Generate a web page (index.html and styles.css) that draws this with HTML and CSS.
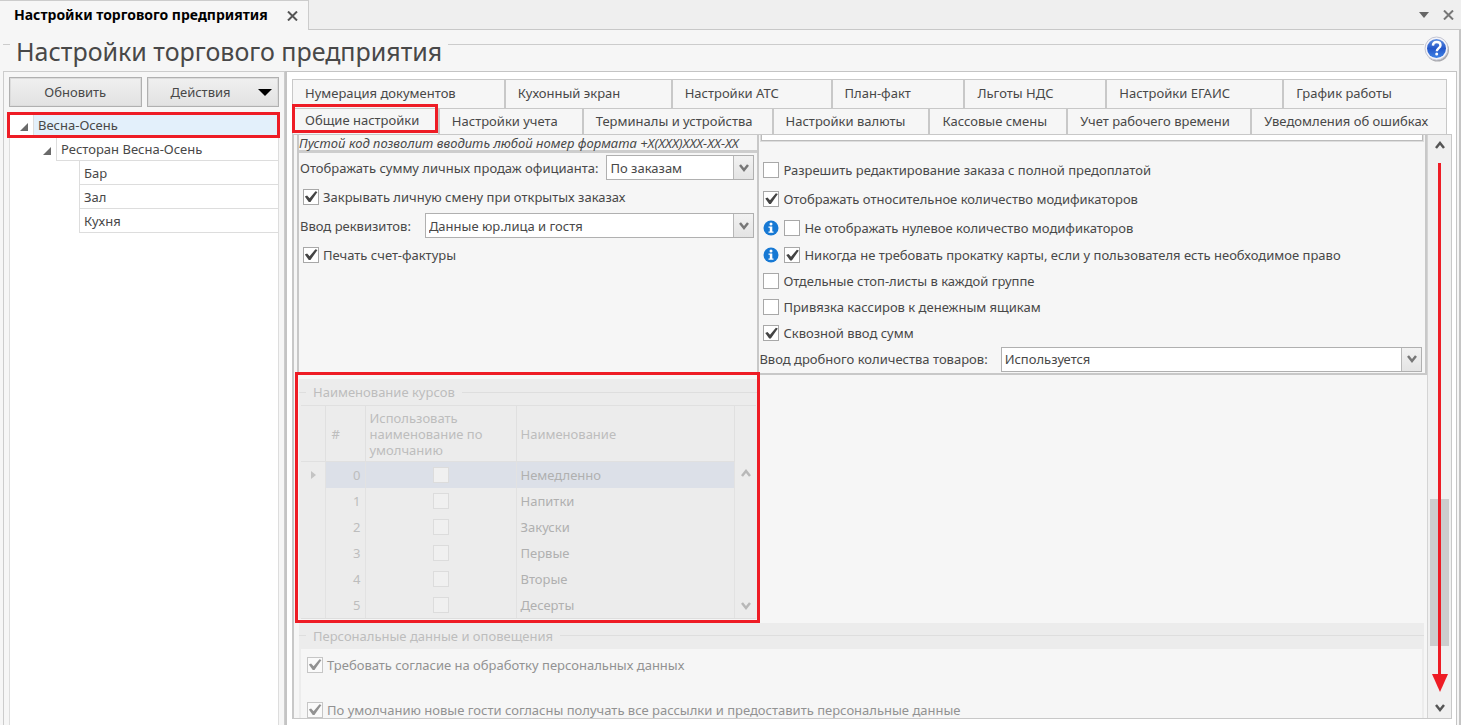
FILE: index.html
```html
<!DOCTYPE html>
<html lang="ru">
<head>
<meta charset="utf-8">
<title>Настройки торгового предприятия</title>
<link rel="stylesheet" href="styles.css">
</head>
<body>
<div class="app">
  <header class="window-bar">
    <div class="window-tab">
      <span class="window-title">Настройки торгового предприятия</span>
      <button class="icon-btn" aria-label="Закрыть вкладку"><svg width="11" height="10" viewBox="0 0 11 10"><path d="M1 0.5L10 9.5M10 0.5L1 9.5" stroke="#555" stroke-width="2"/></svg></button>
    </div>
    <div class="window-tools">
      <button class="icon-btn" aria-label="Список вкладок"><svg width="10" height="6" viewBox="0 0 10 6"><path d="M0 0H10L5 6Z" fill="#666"/></svg></button>
      <button class="icon-btn" aria-label="Закрыть"><svg width="11" height="10" viewBox="0 0 11 10"><path d="M1 0.5L10 9.5M10 0.5L1 9.5" stroke="#777" stroke-width="2"/></svg></button>
    </div>
  </header>

  <main class="page">
    <div class="page-head">
      <h1>Настройки торгового предприятия</h1>
      <button class="icon-btn help" aria-label="Справка">
        <svg width="26" height="26" viewBox="0 0 26 26">
          <defs><linearGradient id="helpFill" x1="0" y1="0" x2="0" y2="1"><stop offset="0" stop-color="#5f8fe0"/><stop offset="0.5" stop-color="#2457c9"/><stop offset="1" stop-color="#3f83e6"/></linearGradient></defs>
          <circle cx="13.5" cy="14" r="11.5" fill="#a9a9ad"/>
          <circle cx="12.5" cy="12.5" r="11.5" fill="#f4f4fa" stroke="#c3c5d2"/>
          <circle cx="12.5" cy="12.5" r="9.5" fill="url(#helpFill)"/>
          <path d="M8.9 9.6C9 7.2 10.6 6 12.7 6c2.200 0 3.800 1.200 3.800 3.200 0 2.800-3.700 3-3.700 6" fill="none" stroke="#fff" stroke-width="2.400"/>
          <circle cx="12.700" cy="18" r="1.500" fill="#fff"/>
        </svg>
      </button>
    </div>

    <div class="workspace">
      <aside class="sidebar">
        <div class="actions">
          <button class="btn">Обновить</button>
          <button class="btn btn-menu"><span>Действия</span><svg width="14" height="7" viewBox="0 0 14 7"><path d="M0 0H14L7 7Z" fill="#000"/></svg></button>
        </div>
        <ul class="tree">
          <li class="node marked">
            <span class="twisty"><svg width="8" height="8" viewBox="0 0 8 8"><path d="M8 0V8H0Z" fill="#6a6a6a"/></svg></span>
            <span class="cell selected">Весна-Осень</span>
          </li>
          <li class="node level-2">
            <span class="twisty"><svg width="8" height="8" viewBox="0 0 8 8"><path d="M8 0V8H0Z" fill="#6a6a6a"/></svg></span>
            <span class="cell">Ресторан Весна-Осень</span>
          </li>
          <li class="node level-3"><span class="cell">Бар</span></li>
          <li class="node level-3"><span class="cell">Зал</span></li>
          <li class="node level-3"><span class="cell">Кухня</span></li>
        </ul>
      </aside>

      <section class="content">
        <nav class="tabs tabs-top">
          <button class="tab">Нумерация документов</button>
          <button class="tab">Кухонный экран</button>
          <button class="tab">Настройки АТС</button>
          <button class="tab">План-факт</button>
          <button class="tab">Льготы НДС</button>
          <button class="tab">Настройки ЕГАИС</button>
          <button class="tab">График работы</button>
        </nav>
        <nav class="tabs tabs-bottom">
          <button class="tab active marked">Общие настройки</button>
          <button class="tab">Настройки учета</button>
          <button class="tab">Терминалы и устройства</button>
          <button class="tab">Настройки валюты</button>
          <button class="tab">Кассовые смены</button>
          <button class="tab">Учет рабочего времени</button>
          <button class="tab">Уведомления об ошибках</button>
        </nav>

        <div class="panel">
          <div class="form">
            <div class="columns">
              <div class="col-left">
                <p class="hint">Пустой код позволит вводить любой номер формата +X(XXX)XXX-XX-XX</p>
                <div class="row">
                  <label for="sales">Отображать сумму личных продаж официанта:</label>
                  <span class="combo"><select id="sales"><option>По заказам</option></select><span class="drop"><svg width="10" height="8" viewBox="0 0 10 8"><path d="M1 1L5 6L9 1" fill="none" stroke="#777" stroke-width="2.500"/></svg></span></span>
                </div>
                <div class="row indent"><label class="check"><input type="checkbox" checked>Закрывать личную смену при открытых заказах</label></div>
                <div class="row wide-gap">
                  <label for="req">Ввод реквизитов:</label>
                  <span class="combo"><select id="req"><option>Данные юр.лица и гостя</option></select><span class="drop"><svg width="10" height="8" viewBox="0 0 10 8"><path d="M1 1L5 6L9 1" fill="none" stroke="#777" stroke-width="2.500"/></svg></span></span>
                </div>
                <div class="row indent"><label class="check"><input type="checkbox" checked>Печать счет-фактуры</label></div>
              </div>

              <div class="col-right">
                <div class="field-edge"></div>
                <div class="row"><label class="check"><input type="checkbox">Разрешить редактирование заказа с полной предоплатой</label></div>
                <div class="row"><label class="check"><input type="checkbox" checked>Отображать относительное количество модификаторов</label></div>
                <div class="row"><svg class="info" width="16" height="16" viewBox="0 0 16 16"><circle cx="8" cy="8" r="7.500" fill="#1779d4"/><circle cx="8" cy="4" r="1.500" fill="#fff"/><path d="M5.500 6.500H9.300V11.500H10.500V12.700H5.500V11.500H6.800V7.700H5.500Z" fill="#fff"/></svg><label class="check"><input type="checkbox">Не отображать нулевое количество модификаторов</label></div>
                <div class="row short"><svg class="info" width="16" height="16" viewBox="0 0 16 16"><circle cx="8" cy="8" r="7.500" fill="#1779d4"/><circle cx="8" cy="4" r="1.500" fill="#fff"/><path d="M5.500 6.500H9.300V11.500H10.500V12.700H5.500V11.500H6.800V7.700H5.500Z" fill="#fff"/></svg><label class="check"><input type="checkbox" checked>Никогда не требовать прокатку карты, если у пользователя есть необходимое право</label></div>
                <div class="row short"><label class="check"><input type="checkbox">Отдельные стоп-листы в каждой группе</label></div>
                <div class="row short"><label class="check"><input type="checkbox">Привязка кассиров к денежным ящикам</label></div>
                <div class="row short"><label class="check"><input type="checkbox" checked>Сквозной ввод сумм</label></div>
                <div class="row short flush">
                  <label for="fraction">Ввод дробного количества товаров:</label>
                  <span class="combo"><select id="fraction"><option>Используется</option></select><span class="drop"><svg width="10" height="8" viewBox="0 0 10 8"><path d="M1 1L5 6L9 1" fill="none" stroke="#777" stroke-width="2.500"/></svg></span></span>
                </div>
              </div>
            </div>

            <div class="courses marked">
              <fieldset class="group" disabled>
                <div class="group-title"><span>Наименование курсов</span></div>
                <div class="grid-wrap">
                  <table>
                    <colgroup><col class="c-mark"><col class="c-num"><col class="c-use"><col></colgroup>
                    <thead><tr><th></th><th>#</th><th>Использовать наименование по умолчанию</th><th>Наименование</th></tr></thead>
                    <tbody>
                      <tr class="current"><td class="pointer"><svg width="5" height="8" viewBox="0 0 5 8"><path d="M0 0L5 4L0 8Z" fill="#c4c4c4"/></svg></td><td>0</td><td><input type="checkbox" aria-label="По умолчанию 0"></td><td>Немедленно</td></tr>
                      <tr><td></td><td>1</td><td><input type="checkbox" aria-label="По умолчанию 1"></td><td>Напитки</td></tr>
                      <tr><td></td><td>2</td><td><input type="checkbox" aria-label="По умолчанию 2"></td><td>Закуски</td></tr>
                      <tr><td></td><td>3</td><td><input type="checkbox" aria-label="По умолчанию 3"></td><td>Первые</td></tr>
                      <tr><td></td><td>4</td><td><input type="checkbox" aria-label="По умолчанию 4"></td><td>Вторые</td></tr>
                      <tr><td></td><td>5</td><td><input type="checkbox" aria-label="По умолчанию 5"></td><td>Десерты</td></tr>
                    </tbody>
                  </table>
                  <div class="grid-scroll">
                    <svg width="10" height="8" viewBox="0 0 10 8"><path d="M1 7L5 2L9 7" fill="none" stroke="#b8b8b8" stroke-width="2.500"/></svg>
                    <svg width="10" height="8" viewBox="0 0 10 8"><path d="M1 1L5 6L9 1" fill="none" stroke="#b8b8b8" stroke-width="2.500"/></svg>
                  </div>
                </div>
              </fieldset>
            </div>

            <fieldset class="group personal" disabled>
              <div class="group-title"><span>Персональные данные и оповещения</span></div>
              <div class="group-body">
                <label class="check"><input type="checkbox" checked>Требовать согласие на обработку персональных данных</label>
                <label class="check"><input type="checkbox" checked>По умолчанию новые гости согласны получать все рассылки и предоставить персональные данные</label>
              </div>
            </fieldset>
          </div>

          <div class="scrollbar">
            <button class="icon-btn" aria-label="Вверх"><svg width="10" height="8" viewBox="0 0 10 8"><path d="M1 7L5 2L9 7" fill="none" stroke="#555" stroke-width="2.500"/></svg></button>
            <div class="track"><div class="thumb"></div><div class="arrow"><svg width="16" height="18" viewBox="0 0 16 18"><path d="M0 0H16L8 18Z" fill="#ee1c25"/></svg></div></div>
            <button class="icon-btn" aria-label="Вниз"><svg width="10" height="8" viewBox="0 0 10 8"><path d="M1 1L5 6L9 1" fill="none" stroke="#555" stroke-width="2.500"/></svg></button>
          </div>
        </div>
      </section>
    </div>
  </main>
</div>
</body>
</html>
```
FILE: styles.css
```css
* { box-sizing: border-box; }

body {
  margin: 0;
  background: #f6f6f6;
  color: #484848;
  font: 13px/16px "Noto Sans", "DejaVu Sans Condensed", sans-serif;
}

button, select { font: inherit; color: inherit; margin: 0; }
svg { display: block; flex: none; }

.app { display: flex; flex-direction: column; height: 100vh; overflow: hidden; }

.icon-btn { padding: 0; border: 0; background: none; display: grid; place-items: center; }

.marked { position: relative; }
.marked::after {
  content: "";
  position: absolute;
  inset: 0;
  border: 3px solid #ee1c25;
  pointer-events: none;
}

/* window tab strip */
.window-bar { display: flex; height: 30px; flex: none; }
.window-tab {
  display: flex; align-items: center; gap: 19px;
  padding: 0 10px 0 14px;
  border: 1px solid #ccc; border-width: 1px 1px 0 0;
}
.window-title { color: #000; font-weight: bold; font-size: 14px; padding-bottom: 2px; }
.window-tools {
  flex: 1; display: flex; justify-content: flex-end; align-items: center; gap: 14px;
  padding-right: 7px;
  background: #efefef;
  border-bottom: 1px solid #c8c8c8;
}

/* page frame */
.page { flex: 1; min-height: 0; display: flex; flex-direction: column; padding-left: 3px; border-right: 2px solid #c4c4c4; }
.page-head { display: flex; align-items: center; height: 41px; padding: 4px 9px 0 0; flex: none; gap: 6px; }
.page-head::before { content: ""; width: 7px; border-top: 1px solid #ccc; margin-bottom: 16px; }
.page-head::after { content: ""; flex: 1; order: 1; border-top: 1px solid #ccc; margin-bottom: 16px; }
.help { order: 2; margin: -8px 0 0 -6px; }
h1 { margin: 0; padding-bottom: 4px; font-size: 25px; line-height: 30px; font-weight: normal; }

.workspace { flex: 1; min-height: 0; display: flex; }

/* sidebar */
.sidebar {
  flex: none; width: 282px; display: flex; flex-direction: column;
  padding: 5px 4px 0 4px;
  border: 1px solid #ccc; border-bottom: 0;
}
.actions { display: grid; grid-template-columns: 1fr 1fr; gap: 5px; padding: 0 1px 6px; }
.btn {
  height: 30px; padding: 0 8px;
  border: 1px solid #b0b0b0; outline: 1px solid #dcdcdc; outline-offset: -2px;
  background: linear-gradient(#f0f0f0, #e2e2e2);
}
.btn-menu { display: flex; align-items: center; justify-content: space-between; padding: 0 6px 0 23px; }
.tree {
  flex: 1; margin: 0 1px; padding: 0; list-style: none;
  background: #fff; border: 1px solid #ddd; border-width: 0 1px;
}
.node { display: flex; height: 24px; }
.node.marked::after { inset: -1px -2px -1px -3px; }
.twisty { width: 23px; display: grid; place-items: center; padding: 4px 0 0 5px; }
.cell { flex: 1; padding: 4px; border: 1px solid #ddd; border-width: 0 0 1px 1px; }
.cell.selected { background: #e3f0fb; }
.level-2 { padding-left: 23px; }
.level-3 { padding-left: 69px; }

/* content */
.content {
  flex: 1; min-width: 0; display: flex; flex-direction: column;
  margin-right: 2px; padding: 7px 4px 6px 5px;
  background: #fff;
  border: 1px solid #c4c4c4; border-width: 1px 1px 0 2px;
}
.tabs { display: grid; margin-right: 5px; border-left: 1px solid #c8c8c8; }
.tabs-top { grid-template-columns: 213fr 167fr 160fr 133fr 142fr 177fr 163fr; height: 29px; }
.tabs-bottom { grid-template-columns: 147fr 144fr 190fr 157fr 138fr 184fr 195fr; height: 26px; }
.tab {
  padding: 0 0 2px 12px; text-align: left; white-space: nowrap;
  border: 1px solid #c8c8c8; border-width: 1px 2px 0 0;
  background: #f6f6f6;
}
.tab:last-child { border-right-width: 1px; }
.tab.active { padding-bottom: 4px; }
.tab.marked::after { inset: -5px 0 1px -1px; }

.panel {
  flex: 1; min-height: 0; display: flex;
  background: #f6f6f6; border: 1px solid #c8c8c8; border-left-width: 2px;
}
.form { flex: 1; min-width: 0; overflow: hidden; padding: 0 0 0 3px; border-right: 1px solid #d4d4d4; }
.columns { display: grid; grid-template-columns: 460fr 669fr; }
.col-left, .col-right { min-width: 0; }
.col-left { border-left: 2px solid #c8c8c8; }
.col-right { border: 2px solid #c8c8c8; border-top: 0; padding-bottom: 1px; }
.hint {
  margin: 0; padding: 0; height: 18px;
  font-style: italic; white-space: nowrap;
  border-bottom: 3px solid #cdcdcd;
}
.row { display: flex; align-items: center; height: 29px; padding: 0 3px 0 1px; gap: 5px; white-space: nowrap; }
.row.indent { padding-left: 4px; }
.row.wide-gap { gap: 14px; }
.col-left .row:not(.wide-gap) { gap: 8px; }
.row.short { height: 26px; }
.row.flush { padding-left: 0; gap: 13px; }
.col-right .row { padding-left: 4px; }
.col-right .row.flush { padding-left: 0; }
.field-edge { height: 6px; margin: 0 2px 14px; background: #fff; border: 1px solid #bbb; border-top: 0; outline: 1px solid #ddd; }

.check { display: flex; align-items: center; gap: 4px; }
input[type="checkbox"] {
  appearance: none; flex: none; margin: 0;
  width: 16px; height: 16px;
  border: 1px solid #a8a8a8; background: #fff;
}
input[type="checkbox"]:checked::before {
  content: ""; display: block; width: 14px; height: 14px;
  background: #444;
  clip-path: polygon(6% 50%, 22% 42%, 40% 62%, 82% 12%, 96% 18%, 46% 90%, 34% 90%);
}

.combo { flex: 1; min-width: 0; display: flex; height: 25px; border: 1px solid #b0b0b0; background: #fff; }
.combo select { appearance: none; flex: 1; min-width: 0; padding: 0 3px; border: 0; background: transparent; }
.drop { width: 20px; display: grid; place-items: center; border-left: 1px solid #b8b8b8; background: linear-gradient(#f2f2f2, #e4e4e4); pointer-events: none; }

/* disabled groups */
.group { min-width: 0; margin: 0; padding: 0; border: 0; background: #ececec; color: #bdbdbd; }
.group-title { display: flex; align-items: center; height: 26px; gap: 7px; }
.group-title::before { content: ""; width: 7px; border-top: 1px solid #dedede; }
.group-title::after { content: ""; flex: 1; border-top: 1px solid #dedede; }
.group input[type="checkbox"] { border-color: #dcdcdc; background: #f0f0f0; }

.courses { width: 41%; padding: 4px 2px 4px 2px; }
.courses.marked::after { inset: -3px 0 0 -2px; }
.grid-wrap { display: flex; margin: 0 2px; border-bottom: 1px solid #dedede; }
table { flex: 1; border-collapse: collapse; table-layout: fixed; }
.c-mark { width: 24px; }
.c-num { width: 40px; }
.c-use { width: 151px; }
th { height: 56px; padding: 0 4px; text-align: left; font-weight: normal; border: 1px solid #e0e0e0; border-left: 0; }
td { height: 26px; padding: 0 4px; border-right: 1px solid #e2e2e2; }
th:nth-child(2) { padding-left: 6px; }
td:nth-child(2) { text-align: right; }
td:nth-child(4) { color: #b0b0b0; }
td input[type="checkbox"] { display: block; margin: 0 auto; }
td.pointer { padding-left: 10px; }
.current td:not(.pointer) { background: #dce0e8; }
.grid-scroll {
  width: 21px; display: flex; flex-direction: column; align-items: center; justify-content: space-between;
  padding: 63px 0 8px; border-top: 1px solid #e0e0e0;
}

.personal { margin: 0 3px 0 2px; }
.group-body {
  display: flex; flex-direction: column; gap: 29px;
  margin: 0 2px; padding: 8px 6px 30px; background: #f6f6f6; color: #929292;
}
.personal .check { white-space: nowrap; }
.personal input[type="checkbox"] { border-color: #c6c6c6; background: #fafafa; }
.personal input[type="checkbox"]:checked::before { background: #929292; }

/* vertical scroll bar */
.scrollbar { flex: none; width: 23px; display: flex; flex-direction: column; padding: 0 2px; background: #f0f0f0; }
.scrollbar .icon-btn { height: 20px; }
.track { flex: 1; position: relative; display: flex; flex-direction: column; }
.thumb { margin-top: auto; height: 27%; margin-bottom: 52px; background: #cdcdcd; }
.arrow {
  position: absolute; inset: 8px 0 6px 0;
  display: flex; flex-direction: column; align-items: center;
}
.arrow::before { content: ""; flex: 1; width: 3px; background: #ee1c25; }
```
